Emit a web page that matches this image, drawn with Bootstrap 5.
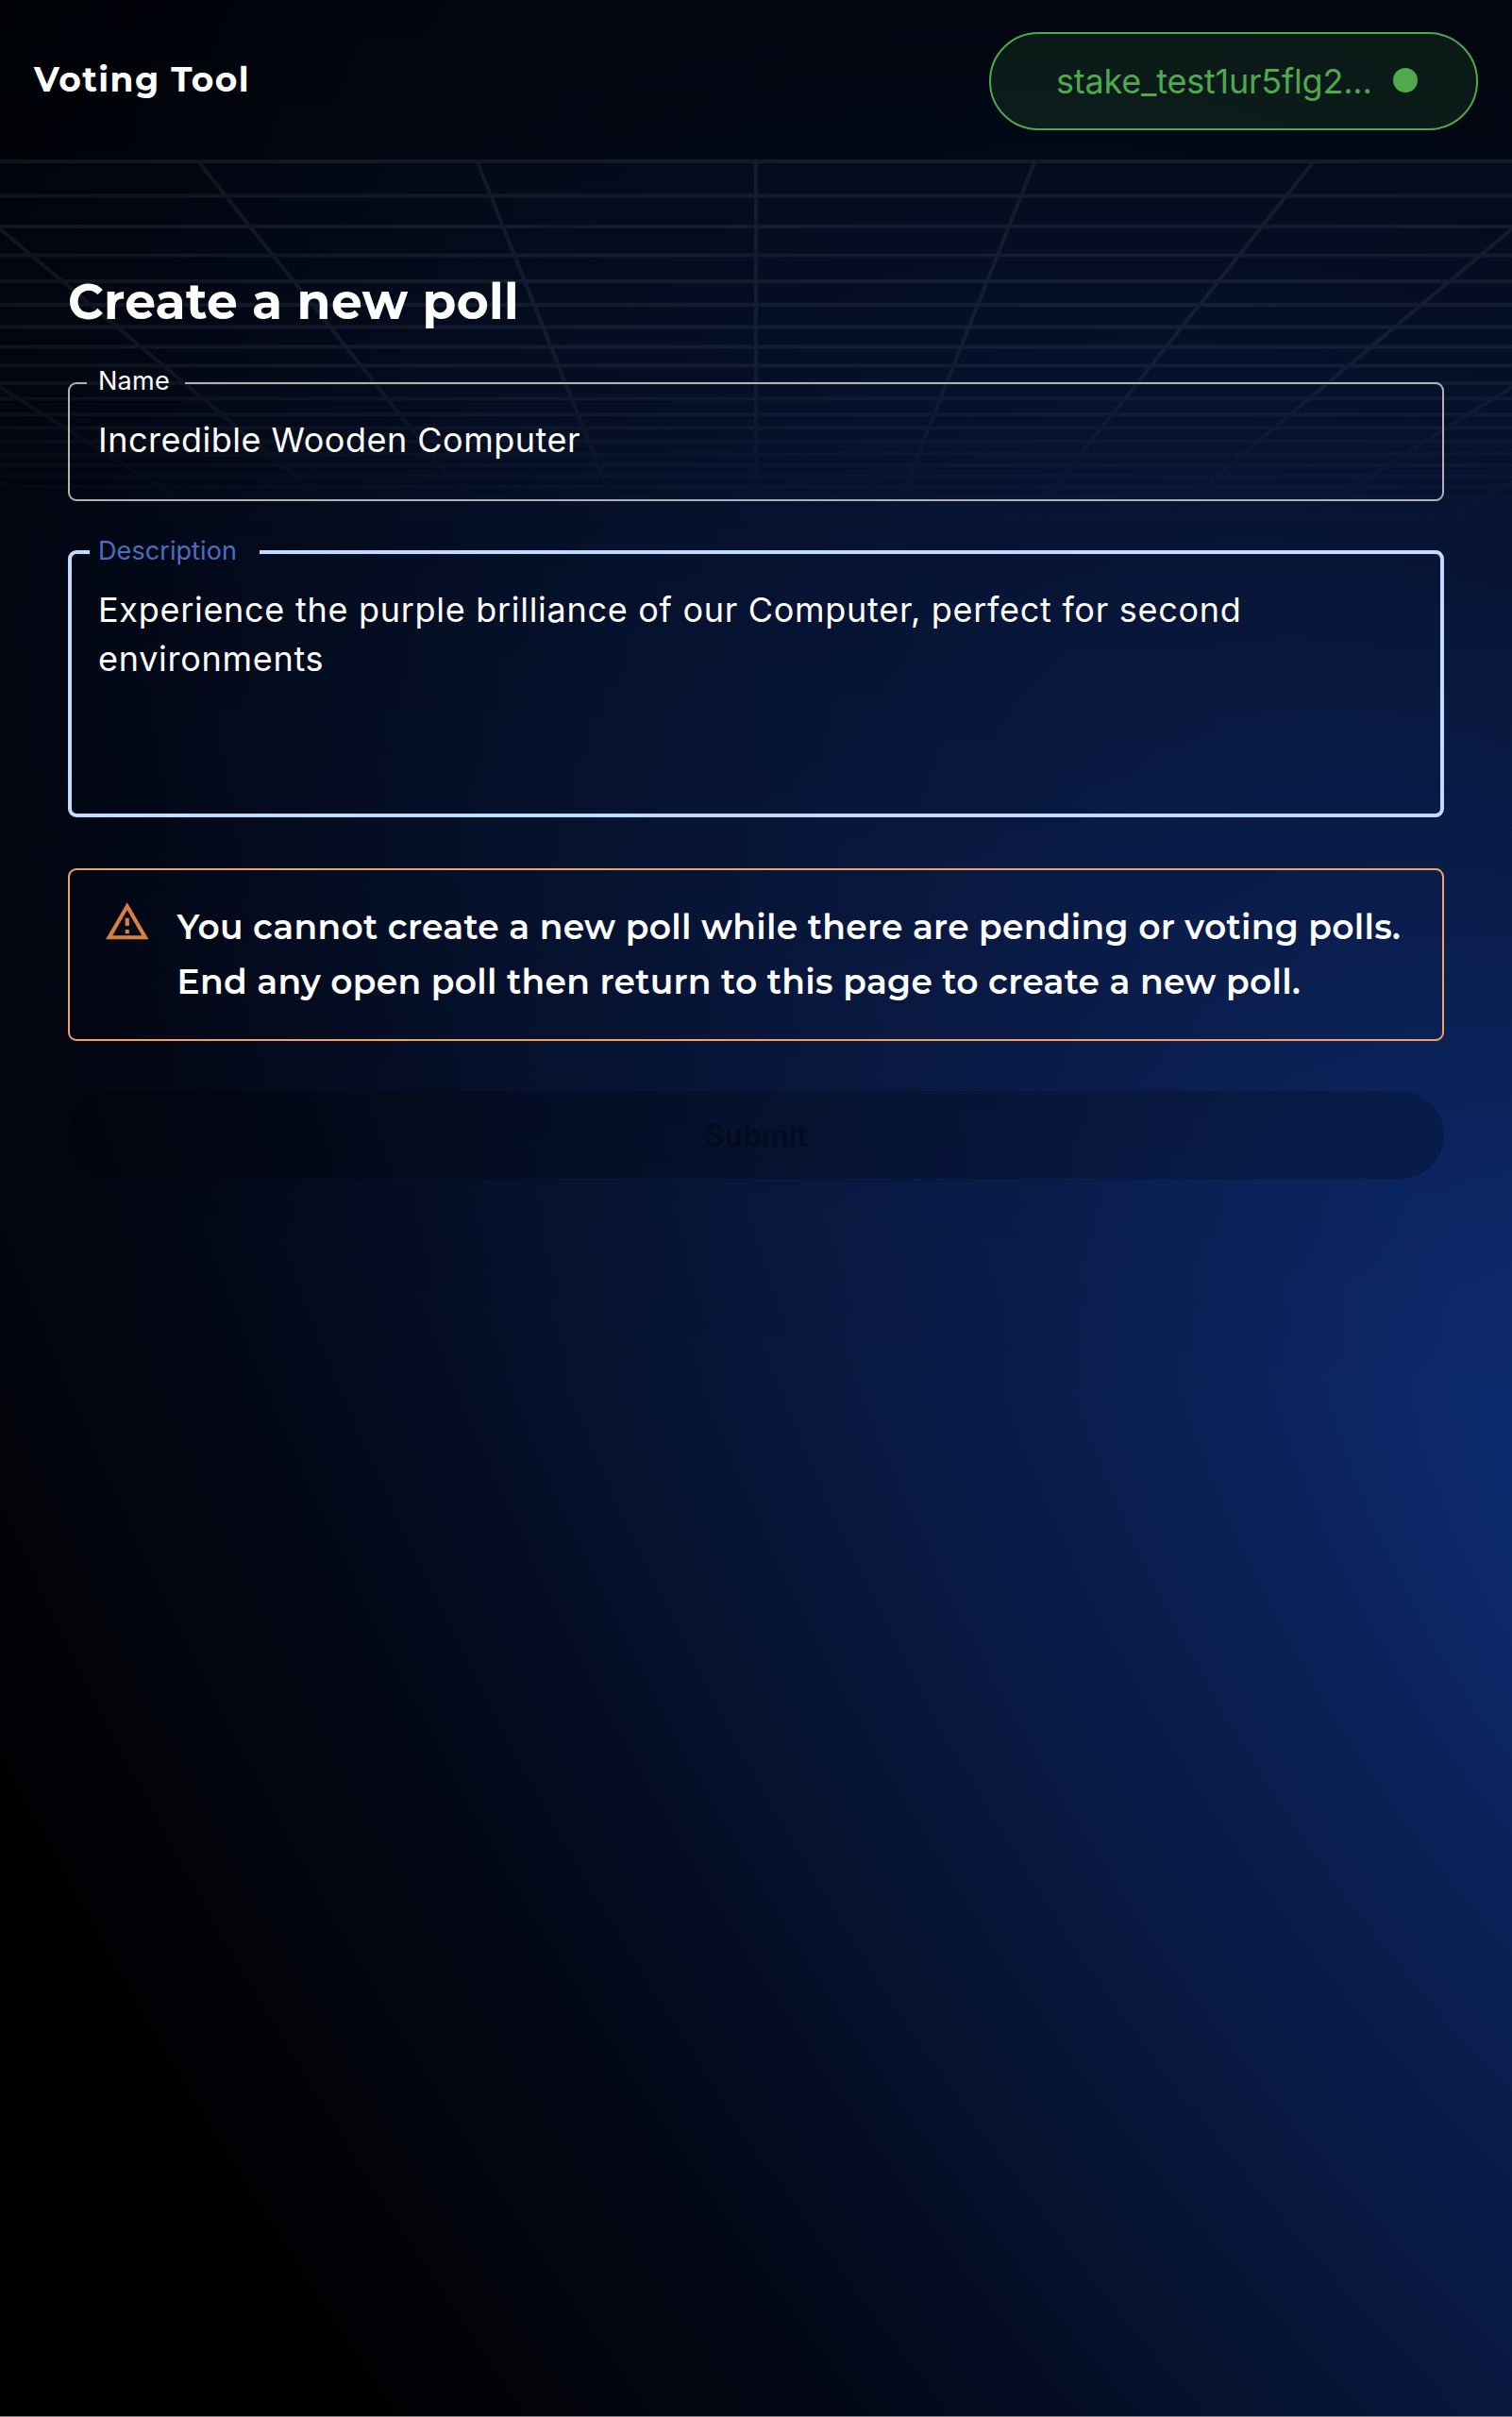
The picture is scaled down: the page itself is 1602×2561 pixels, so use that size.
<!DOCTYPE html>
<html lang="en">
<head>
<meta charset="utf-8">
<meta name="viewport" content="width=device-width, initial-scale=1">
<title>Voting Tool</title>
<link href="https://cdn.jsdelivr.net/npm/bootstrap@5.3.0/dist/css/bootstrap.min.css" rel="stylesheet">
<style>
  body { background: #000; color: #fff; font-family: Inter, sans-serif; font-size: 36px; }
  .page { min-height: 2561px; border-bottom: 1px solid #808080; isolation: isolate; }
  .backdrop { position: absolute; inset: 0; width: 100%; height: 2560px; z-index: -1; }
  .display-font { font-family: Montserrat, Inter, sans-serif; }
  .topbar { height: 169px; padding: 2px 36px 0; background: rgba(0, 0, 0, .25); }
  .brand { font-size: 36px; font-weight: 700; line-height: 54px; letter-spacing: 1.4px; padding-bottom: 4px; }
  .wallet { width: 518px; height: 104px; padding: 0 62px 0 69px; border: 2px solid #4fa94d; color: #4fa94d; background: rgba(79, 169, 77, .12); line-height: 54px; letter-spacing: -.22px; }
  .status-dot { width: 26px; height: 26px; background: #4fa94d; margin-bottom: 1px; }
  .content { padding: 119px 72px 0; }
  .title { font-size: 52px; font-weight: 700; line-height: 64px; letter-spacing: .3px; }
  .outlined { border: 2px solid #b2b2b2; border-radius: 9px; padding: 0 31px; min-width: 0; }
  .outlined legend { float: none; width: auto; font-size: 27px; line-height: 28px; padding: 1px 16px 5px 12px; margin: 0 0 0 -13px; letter-spacing: .25px; }
  .field-name { height: 142px; margin-top: 37px; }
  .field-name .value { padding-top: 17px; letter-spacing: .5px; }
  .field-desc { height: 298px; margin-top: 37px; border: 4px solid #bfdbff; padding: 0 29px; }
  .field-desc legend { color: #4d6dc0; padding: 2px 24px 3px 9px; margin-left: -10px; letter-spacing: .08px; }
  .field-desc .value { padding-top: 19px; width: 1330px; letter-spacing: .71px; }
  .value { line-height: 52px; margin-left: -1px; }
  .notice { height: 183px; margin-top: 54px; padding: 30px 36px; border: 2px solid #f4a261; border-radius: 9px; gap: 28px; }
  .notice svg { width: 49.5px; height: 49.5px; fill: #d9803f; flex: none; }
  .notice p { font-weight: 600; line-height: 58px; white-space: nowrap; padding-top: 1px; letter-spacing: .31px; }
  .submit { height: 93px; margin-top: 53px; font-size: 32px; font-weight: 600; line-height: 56px; border: 0; padding-top: 8px; }
  .submit:disabled { color: rgba(0, 0, 0, .38); background: rgba(0, 0, 0, .2); opacity: 1; }
</style>
<script src="https://cdn.jsdelivr.net/npm/bootstrap@5.3.0/dist/js/bootstrap.bundle.min.js"></script>
</head>
<body>
<div class="page position-relative">
  <svg class="backdrop" viewBox="0 0 1602 2560" preserveAspectRatio="none" aria-hidden="true">
    <defs>
      <radialGradient id="glow" gradientUnits="userSpaceOnUse" cx="0" cy="0" r="1" gradientTransform="translate(1830 1650) rotate(55) scale(3850 1900)">
        <stop offset="0" stop-color="#0d2c73"/>
        <stop offset=".1" stop-color="#0d2a6d"/>
        <stop offset=".2" stop-color="#0b235b"/>
        <stop offset=".3" stop-color="#0a1d4c"/>
        <stop offset=".4" stop-color="#08183f"/>
        <stop offset=".5" stop-color="#061331"/>
        <stop offset=".62" stop-color="#040b1f"/>
        <stop offset=".7" stop-color="#030714"/>
        <stop offset=".8" stop-color="#02040a"/>
        <stop offset=".9" stop-color="#010103"/>
        <stop offset="1" stop-color="#000"/>
      </radialGradient>
      <linearGradient id="dusk" gradientUnits="userSpaceOnUse" x1="0" y1="0" x2="0" y2="1500">
        <stop offset="0" stop-opacity=".55"/>
        <stop offset=".12" stop-opacity=".46"/>
        <stop offset=".4" stop-opacity=".25"/>
        <stop offset=".75" stop-opacity=".1"/>
        <stop offset="1" stop-opacity="0"/>
      </linearGradient>
      <linearGradient id="fade" gradientUnits="userSpaceOnUse" x1="0" y1="169" x2="0" y2="560">
        <stop offset="0" stop-color="#fff"/>
        <stop offset=".5" stop-color="#fff"/>
        <stop offset="1" stop-color="#000"/>
      </linearGradient>
      <mask id="gridFade" maskUnits="userSpaceOnUse" x="0" y="169" width="1602" height="400"><rect y="169" width="1602" height="400" fill="url(#fade)"/></mask>
    </defs>
    <rect width="1602" height="2560" fill="url(#glow)"/>
    <rect width="1602" height="1500" fill="url(#dusk)"/>
    <g mask="url(#gridFade)" opacity=".06" fill="none" stroke="#fff" stroke-width="4">
      <path d="M0 171H1602M0 207.5H1602M0 240H1602M0 270.5H1602M0 298H1602M0 323H1602M0 346.5H1602M0 367.5H1602M0 387.5H1602M0 406H1602M0 422.5H1602M0 439H1602M0 453.500H1602M0 467.500H1602M0 481.500H1602M0 493H1602M0 504.500H1602M0 515.500H1602M0 526.500H1602M0 537H1602M0 546H1602"/>
      <path d="M801 171V560M1096.500 171L801 913L505.500 171M1392 171L801 913L210 171M1687.500 171L801 913L-85.500 171M1983 171L801 913L-381 171M2278.500 171L801 913L-676.500 171"/>
    </g>
  </svg>

  <header class="topbar d-flex align-items-center justify-content-between">
    <div class="brand display-font">Voting Tool</div>
    <div class="wallet rounded-pill d-flex align-items-center justify-content-between">
      <span>stake_test1ur5flg2...</span><span class="status-dot rounded-circle"></span>
    </div>
  </header>

  <main class="content d-flex flex-column">
    <h1 class="title display-font mb-0">Create a new poll</h1>
    <fieldset class="outlined field-name">
      <legend>Name</legend>
      <div class="value">Incredible Wooden Computer</div>
    </fieldset>
    <fieldset class="outlined field-desc">
      <legend>Description</legend>
      <div class="value">Experience the purple brilliance of our Computer, perfect for second environments</div>
    </fieldset>
    <div class="notice d-flex" role="alert">
      <svg viewBox="0 0 24 24"><path d="M12 5.990L19.530 19H4.470L12 5.990M12 2L1 21h22L12 2zm1 14h-2v2h2v-2zm0-6h-2v4h2v-4z"/></svg>
      <p class="display-font mb-0">You cannot create a new poll while there are pending or voting polls.<br>End any open poll then return to this page to create a new poll.</p>
    </div>
    <button class="btn submit rounded-pill w-100" disabled>Submit</button>
  </main>
</div>
</body>
</html>
